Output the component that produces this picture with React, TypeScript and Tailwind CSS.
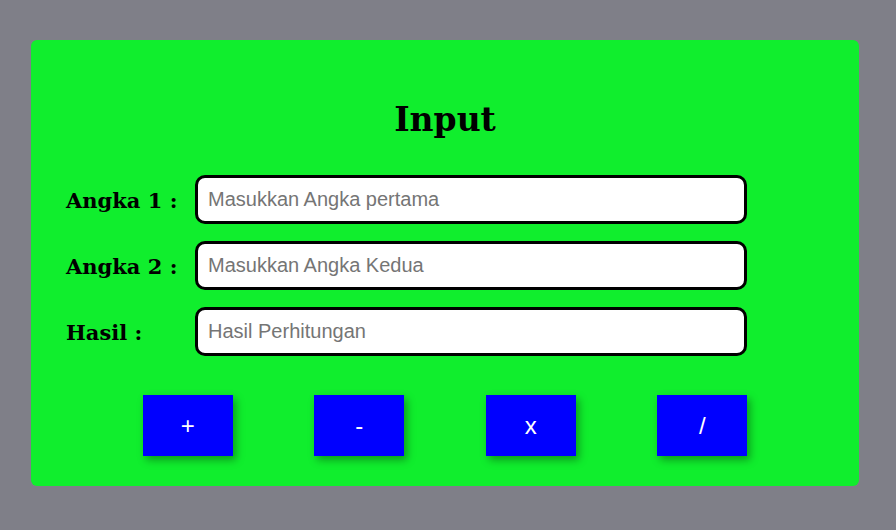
import React from "react";

const fields = [
  { label: "Angka 1 :", placeholder: "Masukkan Angka pertama" },
  { label: "Angka 2 :", placeholder: "Masukkan Angka Kedua" },
  { label: "Hasil :", placeholder: "Hasil Perhitungan" },
];

const ops = ["+", "-", "x", "/"];

export default function App() {
  return (
    <div className="flex h-[530px] w-full items-start bg-[#7f7f88] pt-10 pl-[31px]">
      <div className="flex h-[446px] w-[828px] flex-col rounded-md bg-[#10ee2d] px-[35px] pt-[58px]">
        <h1 className="mb-[33px] text-center font-['DejaVu_Serif',Georgia,serif] text-[33px] leading-[44px] font-bold text-black">
          Input
        </h1>

        <div className="flex flex-col gap-[17px]">
          {fields.map((f) => (
            <div key={f.label} className="flex items-center">
              <label className="w-[129px] pt-[2px] font-['DejaVu_Serif',Georgia,serif] text-[21px] font-bold text-black">
                {f.label}
              </label>
              <input
                type="text"
                placeholder={f.placeholder}
                className="h-[49px] w-[552px] rounded-[10px] border-[3px] border-black bg-white px-[10px] font-['Liberation_Sans',Arial,sans-serif] text-[20px] text-black outline-none placeholder:text-[#757575]"
              />
            </div>
          ))}
        </div>

        <div className="mt-[39px] flex justify-center gap-[81.5px]">
          {ops.map((op) => (
            <button
              key={op}
              className="h-[61px] w-[90px] bg-[#0000ff] font-['Liberation_Sans',Arial,sans-serif] text-[24px] text-white shadow-[3px_4px_8px_rgba(0,0,0,0.35)]"
            >
              {op}
            </button>
          ))}
        </div>
      </div>
    </div>
  );
}
